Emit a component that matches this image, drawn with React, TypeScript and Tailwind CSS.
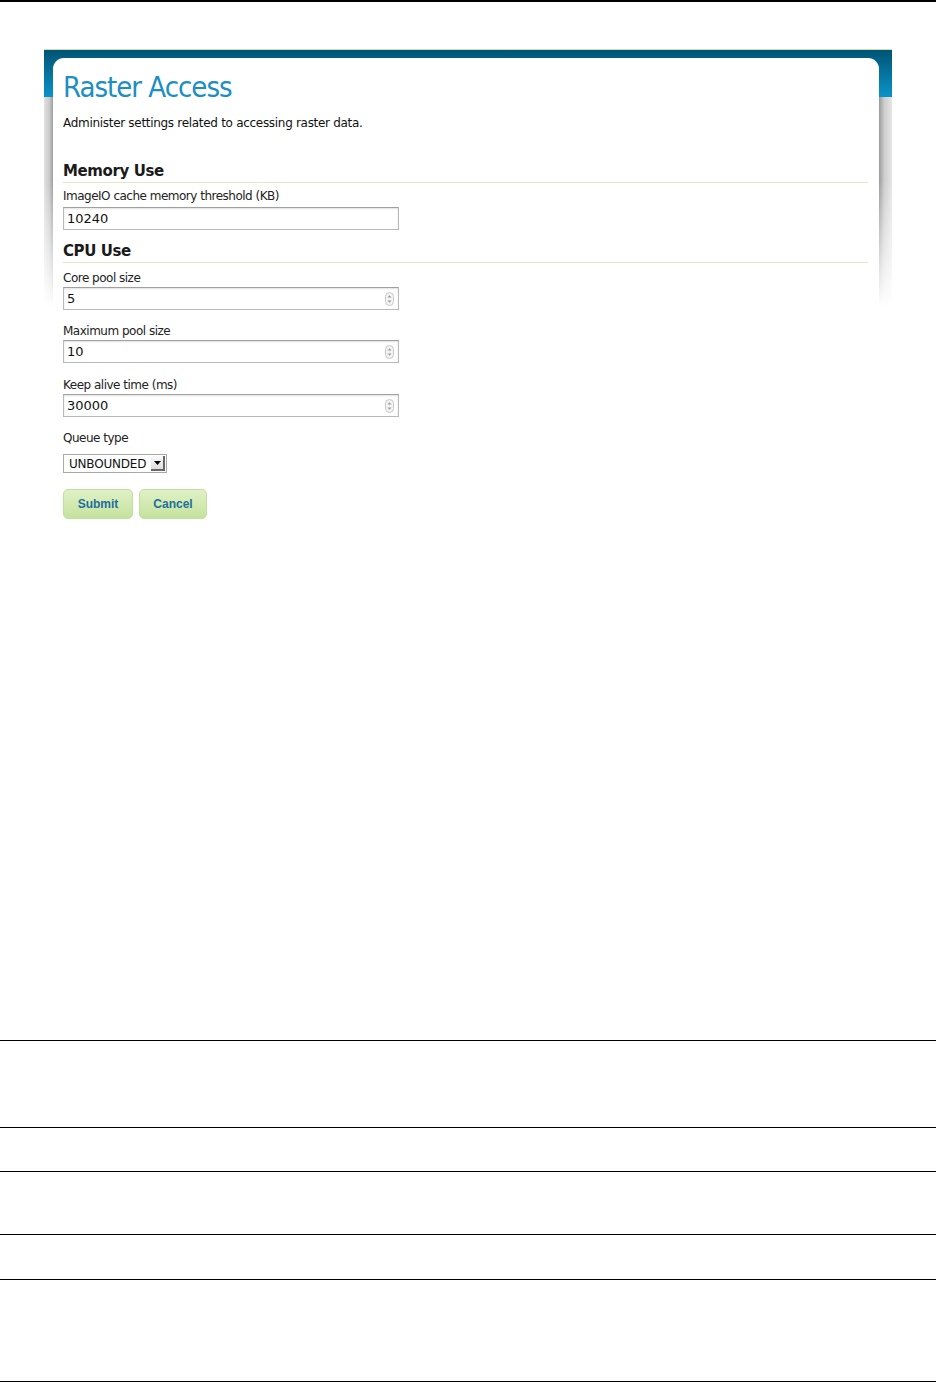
import React from "react";

const font = { fontFamily: '"DejaVu Sans", Verdana, sans-serif' };

function Spinner() {
  return (
    <svg width="9" height="14" viewBox="0 0 9 14" className="mr-[4px]">
      <rect x="0.5" y="0.5" width="8" height="13" rx="4" fill="#f4f4f4" stroke="#c8c8c8" />
      <path d="M2.5 5.5 L4.5 3.2 L6.5 5.5 Z" fill="#9a9a9a" />
      <path d="M2.5 8.5 L4.5 10.8 L6.5 8.5 Z" fill="#9a9a9a" />
    </svg>
  );
}

function Field({ label, value, spin, mt, imt }: { label: string; value: string; spin?: boolean; mt: string; imt: string }) {
  return (
    <>
      <div className={`${mt} text-[12px] leading-[16px] tracking-[-0.5px] text-[#222]`}>{label}</div>
      <div
        className={`${imt} flex h-[23px] w-[336px] items-center justify-between border border-[#b9b9b9] border-t-[#a0a0a0] bg-white pl-[3px] shadow-[inset_0_1px_2px_rgba(0,0,0,0.12)]`}
      >
        <span className="text-[13px] text-[#111]">{value}</span>
        {spin ? <Spinner /> : null}
      </div>
    </>
  );
}

function SideShadow({ dir, w }: { dir: "l" | "r"; w: string }) {
  return (
    <div className={`${w} mt-[47px] flex flex-col`}>
      <div
        className={`h-[210px] [mask-image:linear-gradient(to_bottom,black_40%,transparent)] ${
          dir === "l"
            ? "bg-[linear-gradient(to_right,#e2e2e2,#c9c9c9_60%,#9d9d9d)]"
            : "bg-[linear-gradient(to_left,#e6e6e6,#cdcdcd_60%,#9a9a9a)]"
        }`}
      />
    </div>
  );
}

export default function App() {
  return (
    <div className="relative h-[1382px] w-[936px] overflow-hidden bg-white" style={font}>
      <div className="h-[1040px]">
        <div className="h-[1.5px] w-full bg-black" />
        <div className="ml-[44px] mt-[47.5px] flex w-[848px] border-t border-[#cfe0a8] bg-[linear-gradient(to_bottom,#005474,#0a93c9)] bg-[length:100%_47px] bg-no-repeat">
          <SideShadow dir="l" w="w-[9px]" />
          <div className="mt-[8px] h-[470px] w-[826px] rounded-t-[11px] bg-white pl-[10px] pr-[11px]">
            <div className="pt-[12px] text-[29px] leading-[34px] tracking-[-1px] text-[#1b8ec4]" style={{ fontFamily: '"DejaVu Sans Condensed", "DejaVu Sans", sans-serif', fontStretch: "condensed" }}>
              Raster Access
            </div>
            <div className="mt-[11px] text-[12px] leading-[16px] text-[#111] tracking-[-0.3px]">
              Administer settings related to accessing raster data.
            </div>
            <div className="mt-[31px] border-b border-[#dfe9c6] pb-[1px]">
              <div className="text-[15px] font-bold leading-[19px] tracking-[-0.4px] text-[#1a1a1a]">Memory Use</div>
            </div>
            <Field label="ImageIO cache memory threshold (KB)" value="10240" mt="mt-[5px]" imt="mt-[3px]" />
            <div className="mt-[12px] border-b border-[#dfe9c6] pb-[1px]">
              <div className="text-[15px] font-bold leading-[19px] tracking-[-0.4px] text-[#1a1a1a]">CPU Use</div>
            </div>
            <Field label="Core pool size" value="5" spin mt="mt-[7px]" imt="mt-[1px]" />
            <Field label="Maximum pool size" value="10" spin mt="mt-[13px]" imt="mt-[1px]" />
            <Field label="Keep alive time (ms)" value="30000" spin mt="mt-[14px]" imt="mt-[1px]" />
            <div className="mt-[13px] text-[12px] leading-[16px] tracking-[-0.5px] text-[#222]">Queue type</div>
            <div className="mt-[8px] flex h-[19px] w-[104px] items-center border border-[#a9a9a9] bg-white">
              <span className="flex-1 pl-[5px] text-[12px] leading-[16px] tracking-[-0.2px] text-[#111]">UNBOUNDED</span>
              <div className="mr-[1px] flex h-[15px] w-[14px] items-center justify-center border-r-2 border-b-2 border-r-[#666] border-b-[#666] bg-[linear-gradient(to_bottom,#fafafa,#dedede)]">
                <svg width="7" height="4" viewBox="0 0 7 4">
                  <path d="M0 0 L7 0 L3.5 4 Z" fill="#000" />
                </svg>
              </div>
            </div>
            <div className="mt-[16px] flex gap-[6px]" style={{ fontFamily: '"Liberation Sans", Arial, sans-serif' }}>
              <button className="flex h-[30px] w-[70px] items-center justify-center rounded-[5px] border border-[#c2dfa2] bg-[linear-gradient(to_bottom,#e0f1c6,#c5e29d)] text-[12px] font-bold text-[#1d6f9e]">
                Submit
              </button>
              <button className="flex h-[30px] w-[68px] items-center justify-center rounded-[5px] border border-[#c2dfa2] bg-[linear-gradient(to_bottom,#e0f1c6,#c5e29d)] text-[12px] font-bold text-[#1d6f9e]">
                Cancel
              </button>
            </div>
          </div>
          <SideShadow dir="r" w="w-[13px]" />
        </div>
      </div>
      <div className="h-px bg-black" />
      <div className="h-[86px]" />
      <div className="h-px bg-black" />
      <div className="h-[43px]" />
      <div className="h-px bg-black" />
      <div className="h-[62px]" />
      <div className="h-px bg-black" />
      <div className="h-[44px]" />
      <div className="h-px bg-black" />
      <div className="h-[101px]" />
      <div className="h-px bg-black" />
    </div>
  );
}
